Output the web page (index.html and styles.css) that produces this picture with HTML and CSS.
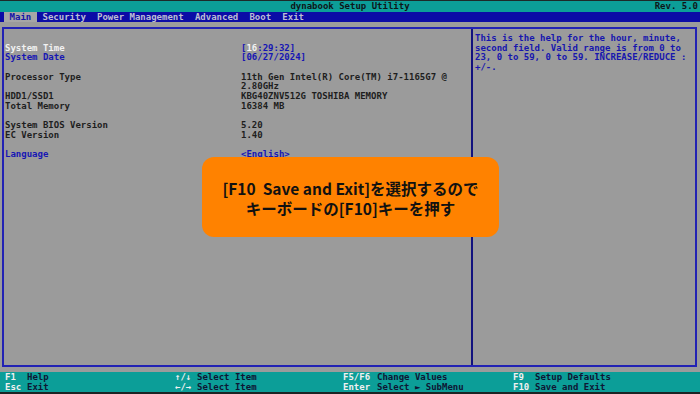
FILE: index.html
```html
<!DOCTYPE html>
<html lang="ja">
<head>
	<meta charset="UTF-8" />
	<title>dynabook Setup Utility</title>
	<link rel="stylesheet" href="styles.css">
</head>
<body>

<div id="ecran">
	<div id="barreTitre">
		<div></div>
		<div class="titre">dynabook Setup Utility</div>
		<div class="rev">Rev. 5.0</div>
	</div>

	<div id="barreMenu">
		<span class="onglet actif">Main</span>
		<span class="onglet">Security</span>
		<span class="onglet">Power Management</span>
		<span class="onglet">Advanced</span>
		<span class="onglet">Boot</span>
		<span class="onglet">Exit</span>
	</div>

	<div id="zoneGrise">
		<div id="cadre">
			<div class="panneau gauche">
				<div class="ligne vide"></div>
				<div class="ligne"><span class="blanc">System Time</span><span class="bleu">[<span class="blanc">16</span>:29:32]</span></div>
				<div class="ligne"><span class="bleu">System Date</span><span class="bleu">[06/27/2024]</span></div>
				<div class="ligne vide"></div>
				<div class="ligne"><span>Processor Type</span><span>11th Gen Intel(R) Core(TM) i7-1165G7 @<br />2.80GHz</span></div>
				<div class="ligne"><span>HDD1/SSD1</span><span>KBG40ZNV512G TOSHIBA MEMORY</span></div>
				<div class="ligne"><span>Total Memory</span><span>16384 MB</span></div>
				<div class="ligne vide"></div>
				<div class="ligne"><span>System BIOS Version</span><span>5.20</span></div>
				<div class="ligne"><span>EC Version</span><span>1.40</span></div>
				<div class="ligne vide"></div>
				<div class="ligne"><span class="bleu">Language</span><span class="bleu">&lt;English&gt;</span></div>
			</div>
			<div class="panneau aide">This is the help for the hour, minute,<br />second field. Valid range is from 0 to<br />23, 0 to 59, 0 to 59. INCREASE/REDUCE :<br />+/-.</div>
		</div>
	</div>

	<div id="barreTouches">
		<div class="col c1"><span class="touche">F1</span><span class="desc">Help</span></div>
		<div class="col c2"><span class="touche">↑/↓</span><span class="desc">Select Item</span></div>
		<div class="col c3"><span class="touche">F5/F6</span><span class="desc">Change Values</span></div>
		<div class="col c4"><span class="touche">F9</span><span class="desc">Setup Defaults</span></div>
		<div class="col c1"><span class="touche">Esc</span><span class="desc">Exit</span></div>
		<div class="col c2"><span class="touche">←/→</span><span class="desc">Select Item</span></div>
		<div class="col c3"><span class="touche">Enter</span><span class="desc">Select ► SubMenu</span></div>
		<div class="col c4"><span class="touche">F10</span><span class="desc">Save and Exit</span></div>
	</div>

	<!-- bulle explicative par dessus l'ecran -->
	<div id="bulle">[F10&nbsp; Save and Exit]を選択するので<br />キーボードの[F10]キーを押す</div>
</div>

</body>
</html>
```

FILE: styles.css
```css
	body {
		margin:0;
		background-color:#9b9b9b;
	}
	#ecran {
		position:relative;
		width:700px;
		height:394px;
		overflow:hidden;
		font-family:"DejaVu Sans Mono", "Liberation Mono", monospace;
		font-weight:bold;
		font-size:9px;
		color:#1e1e1e;
	}
	#barreTitre {
		display:grid;
		grid-template-columns:1fr auto 1fr;
		height:11px;
		line-height:11px;
		border-top:1px solid #1d2a2a;
		background-color:#0c9e98;
		color:#0e1618;
	}
	#barreTitre .rev {
		text-align:right;
		padding-right:2px;
	}
	#barreMenu {
		display:flex;
		height:10px;
		line-height:10px;
		padding-left:4px;
		background-color:#0b0ba6;
	}
	.onglet {
		padding:0 5.6px;
		color:#bcbcd4;
	}
	.onglet.actif {
		background-color:#a6a6a6;
		color:#1414a8;
	}
	#zoneGrise {
		height:340px;
		padding:5px 3px 5px 2px;
		background-color:#9b9b9b;
	}
	#cadre {
		display:grid;
		grid-template-columns:1fr 224px;
		height:336px;
		border:2px solid #2222b4;
	}
	.panneau {
		padding-top:5px;
		line-height:9.7px;
	}
	.gauche {
		padding-left:1px;
	}
	.ligne {
		display:grid;
		grid-template-columns:236px 1fr;
	}
	.vide {
		height:9.7px;
	}
	.aide {
		border-left:2px solid #12127e;
		padding-left:2px;
		color:#1616ae;
	}
	.blanc {
		color:#f2f2f2;
	}
	.bleu {
		color:#1616b4;
	}
	#barreTouches {
		display:grid;
		grid-template-columns:170px 168px 170px 1fr;
		padding:1px 0 0 5px;
		line-height:9.5px;
		border-bottom:2px solid #1c2424;
		background-color:#0c9e98;
		box-sizing:border-box;
		height:22px;
	}
	.touche {
		display:inline-block;
		width:22px;
		color:#f0f0f0;
	}
	.c3 .touche {
		width:34px;
	}
	.desc {
		color:#0e1634;
	}
	#bulle {
		position:absolute;
		left:202px;
		top:157px;
		width:297px;
		height:80px;
		padding-top:2px;
		box-sizing:border-box;
		border-radius:12px;
		background-color:#ff8200;
		color:#111;
		display:flex;
		align-items:center;
		justify-content:center;
		text-align:center;
		font-family:"Noto Sans CJK JP", "Noto Sans", sans-serif;
		font-weight:bold;
		font-size:15.5px;
		line-height:20px;
	}
```
